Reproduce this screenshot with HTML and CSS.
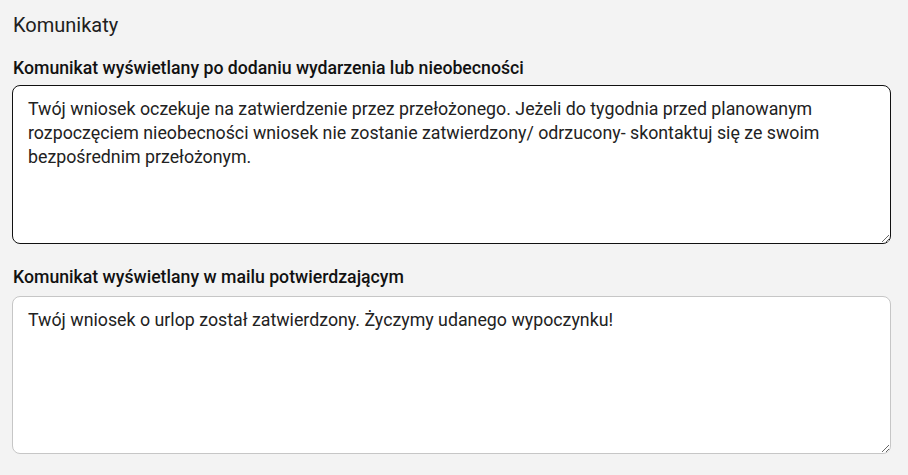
FILE: index.html
```html
<!DOCTYPE html>
<html lang="pl">
<head>
<meta charset="utf-8">
<link rel="stylesheet" href="styles.css">
</head>
<body>
<div class="page">
  <h2 class="title">Komunikaty</h2>
  <div class="field field-first">
    <label class="label" for="m1">Komunikat wyświetlany po dodaniu wydarzenia lub nieobecności</label>
    <textarea id="m1" class="box box-active">Twój wniosek oczekuje na zatwierdzenie przez przełożonego. Jeżeli do tygodnia przed planowanym rozpoczęciem nieobecności wniosek nie zostanie zatwierdzony/ odrzucony- skontaktuj się ze swoim bezpośrednim przełożonym.</textarea>
  </div>
  <div class="field">
    <label class="label" for="m2">Komunikat wyświetlany w mailu potwierdzającym</label>
    <textarea id="m2" class="box">Twój wniosek o urlop został zatwierdzony. Życzymy udanego wypoczynku!</textarea>
  </div>
</div>
</body>
</html>
```

FILE: styles.css
```css
html, body {
  margin: 0;
  padding: 0;
  background: #f3f3f3;
}
body {
  font-family: Roboto, "Liberation Sans", sans-serif;
  color: #1f1f1f;
}
.page {
  display: flex;
  flex-direction: column;
  padding: 12px 17px 0 12px;
}
.title {
  margin: 0 0 20px 1px;
  font-size: 20px;
  font-weight: 400;
  line-height: 26px;
  color: #202020;
}
.field {
  display: flex;
  flex-direction: column;
  gap: 9px;
  margin-bottom: 23px;
}
.field-first {
  gap: 7px;
}
.label {
  margin-left: 1px;
  font-size: 17.7px;
  font-weight: 500;
  line-height: 20px;
  color: #111;
}
.box {
  box-sizing: border-box;
  width: 100%;
  height: 158px;
  margin: 0;
  padding: 11px 15px;
  border: 1px solid #c6c6c6;
  border-radius: 8px;
  background: #fff;
  font-family: Roboto, "Liberation Sans", sans-serif;
  font-size: 17.8px;
  line-height: 24px;
  color: #222;
  resize: vertical;
  outline: none;
}
.box-active {
  height: 159px;
  border-color: #111;
}
```
